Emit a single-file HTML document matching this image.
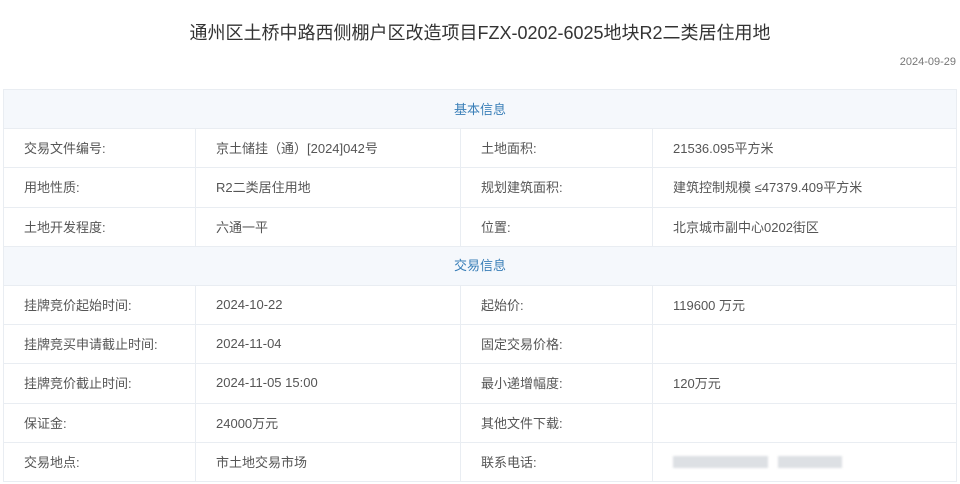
<!DOCTYPE html>
<html><head><meta charset="utf-8"><style>
body{margin:0;background:#fff;width:960px;height:484px;overflow:hidden;font-family:"Liberation Sans","Noto Sans CJK SC",sans-serif;}
.title{position:absolute;top:19px;left:0;width:960px;text-align:center;font-size:18px;color:#333;}
.date{position:absolute;top:56px;right:4px;font-size:11px;color:#777;}
table{position:absolute;top:89px;left:3px;width:954px;border-collapse:collapse;}
td{height:39.2px;border:1px solid #e9edf2;font-size:13px;color:#555;padding:0 0 1px 20px;box-sizing:border-box;}
td.h{background:#f5f8fc;color:#3a7fb8;text-align:center;padding:0 0 2px 0;}
.blur{display:inline-block;height:12px;background:#dde0e4;vertical-align:middle;filter:blur(1px);}
</style></head><body>
<div class="title">通州区土桥中路西侧棚户区改造项目FZX-0202-6025地块R2二类居住用地</div>
<div class="date">2024-09-29</div>
<table>
<colgroup><col style="width:192px"><col style="width:265px"><col style="width:192px"><col></colgroup>
<tr><td class="h" colspan="4">基本信息</td></tr>
<tr><td>交易文件编号:</td><td>京土储挂（通）[2024]042号</td><td>土地面积:</td><td>21536.095平方米</td></tr>
<tr><td>用地性质:</td><td>R2二类居住用地</td><td>规划建筑面积:</td><td>建筑控制规模 ≤47379.409平方米</td></tr>
<tr><td>土地开发程度:</td><td>六通一平</td><td>位置:</td><td>北京城市副中心0202街区</td></tr>
<tr><td class="h" colspan="4">交易信息</td></tr>
<tr><td>挂牌竞价起始时间:</td><td>2024-10-22</td><td>起始价:</td><td>119600 万元</td></tr>
<tr><td>挂牌竞买申请截止时间:</td><td>2024-11-04</td><td>固定交易价格:</td><td></td></tr>
<tr><td>挂牌竞价截止时间:</td><td>2024-11-05 15:00</td><td>最小递增幅度:</td><td>120万元</td></tr>
<tr><td>保证金:</td><td>24000万元</td><td>其他文件下载:</td><td></td></tr>
<tr><td>交易地点:</td><td>市土地交易市场</td><td>联系电话:</td><td><span class="blur" style="width:95px"></span> <span class="blur" style="width:64px;margin-left:6px"></span></td></tr>
</table>
</body></html>
